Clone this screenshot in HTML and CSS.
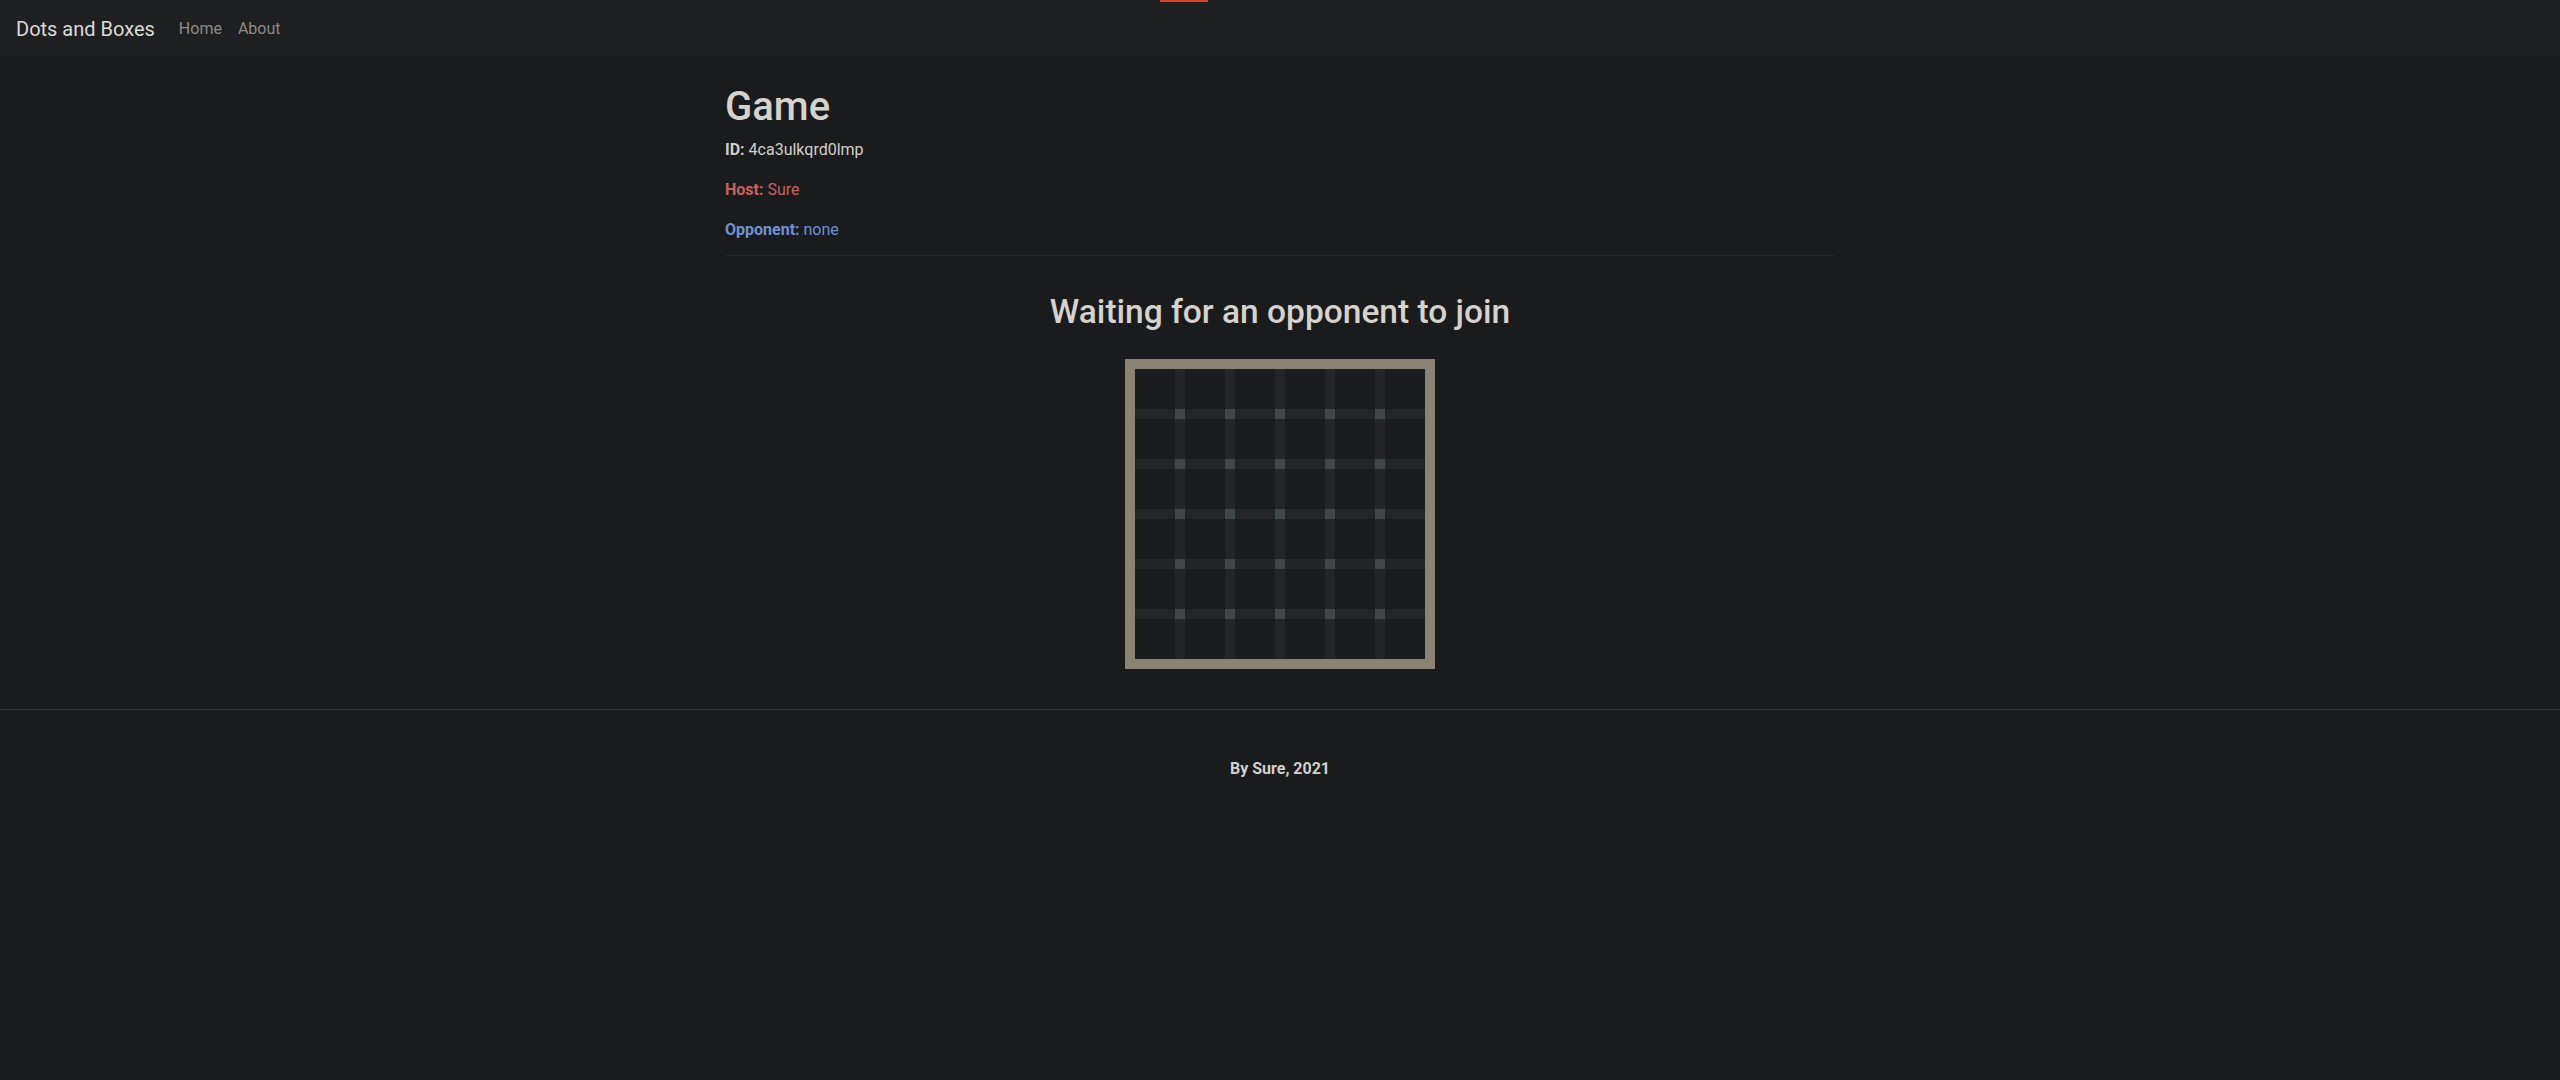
FILE: index.html
```html
<!DOCTYPE html>
<html lang="en">
<head>
<meta charset="utf-8">
<title>Dots and Boxes</title>
<link rel="stylesheet" href="styles.css">
</head>
<body>
<div class="progress-bar"></div>
<nav class="navbar">
  <a class="brand" href="#">Dots and Boxes</a>
  <a class="nav-link" href="#">Home</a>
  <a class="nav-link" href="#">About</a>
</nav>
<main class="container">
  <h1 class="title">Game</h1>
  <p class="info"><b>ID:</b> 4ca3ulkqrd0lmp</p>
  <p class="info host"><b>Host:</b> Sure</p>
  <p class="info opponent"><b>Opponent:</b> none</p>
  <hr class="sep">
  <h2 class="status">Waiting for an opponent to join</h2>
  <div class="board-wrap">
    <div class="board"><div class="board-inner"></div></div>
  </div>
</main>
<footer class="footer">
  <p class="credit">By Sure, 2021</p>
</footer>
</body>
</html>
```
FILE: styles.css
```css
* { box-sizing: border-box; }
html, body { margin: 0; padding: 0; }
body {
  background: #1a1b1d;
  color: #d3cfc9;
  font-family: Roboto, "Open Sans", "Liberation Sans", sans-serif;
  font-size: 16px;
  line-height: 1.5;
  min-height: 1080px;
}
.progress-bar {
  position: absolute;
  top: 0;
  left: 1160px;
  width: 48px;
  height: 2px;
  background: #d9462b;
}
.navbar {
  height: 56px;
  background: #1d1f21;
  display: flex;
  align-items: center;
  padding: 1px 16px 0;
}
.navbar a { text-decoration: none; }
.brand {
  color: #dedad4;
  font-size: 20px;
  margin-right: 16px;
}
.nav-link {
  color: #8e8b86;
  font-size: 16px;
  padding: 0 8px;
}
.container {
  width: 1140px;
  margin: 0 auto;
  padding: 27px 15px 0;
}
.title {
  font-size: 40px;
  font-weight: 500;
  line-height: 1.2;
  margin: 0 0 7px;
  color: #d6d2cc;
}
.info {
  margin: 0 0 16px;
  font-size: 16px;
}
.info.opponent { margin-bottom: 13px; }
.info b { font-weight: 700; }
.host { color: #c8625f; }
.opponent { color: #6f92d2; }
.sep {
  border: 0;
  border-top: 1px solid #242628;
  margin: 0;
}
.status {
  text-align: center;
  font-size: 33.5px;
  font-weight: 500;
  line-height: 1.2;
  margin: 36px 0 27px;
  color: #d6d2cc;
}
.board-wrap {
  display: flex;
  justify-content: center;
  padding-bottom: 40px;
}
.board {
  border: 10px solid #8a8273;
}
.board-inner {
  width: 290px;
  height: 290px;
  background-color: #1b1c1e;
  background-image:
    conic-gradient(from 90deg at 40px 40px, #404749 25%, transparent 0),
    linear-gradient(to right, transparent 40px, #232527 40px),
    linear-gradient(to bottom, transparent 40px, #232527 40px);
  background-size: 50px 50px, 50px 100%, 100% 50px;
}
.footer {
  border-top: 1px solid #38393b;
  text-align: center;
  padding-top: 47px;
}
.credit {
  font-weight: 700;
  margin: 0;
  color: #d3cfc9;
}
```
